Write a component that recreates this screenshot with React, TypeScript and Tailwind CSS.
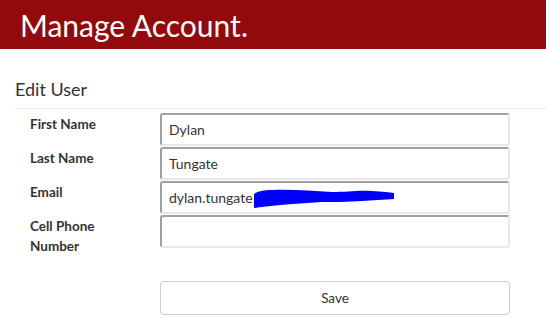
import React from 'react';

const fields = [
  { label: 'First Name', value: 'Dylan' },
  { label: 'Last Name', value: 'Tungate' },
  { label: 'Email', value: 'dylan.tungate', redacted: true },
  { label: 'Cell Phone Number', value: '' },
];

const App: React.FC = () => {
  return (
    <div className="w-[546px] h-[334px] bg-white overflow-hidden font-['Lato','Liberation_Sans',sans-serif] text-[#333]">
      <div className="h-[49px] bg-[#920a0c] flex items-center pl-[20px]">
        <h1 className="text-[30px] text-white leading-none">Manage Account.</h1>
      </div>

      <div className="pl-[15px] pt-[30px]">
        <h2 className="text-[18px] leading-[20px] text-[#333]">Edit User</h2>
        <div className="mt-[9px] border-t border-[#eeeeee]" />

        <div className="mt-[4px] flex flex-col gap-[1px]">
          {fields.map((f) => (
            <div key={f.label} className="flex">
              <label className="w-[145px] pl-[15px] pt-[1px] pr-[30px] text-[13.5px] font-bold leading-[20px] text-[#333]">
                {f.label}
              </label>
              <div className="relative">
                <input
                  type="text"
                  defaultValue={f.value}
                  className="w-[350px] h-[33px] px-[7px] text-[14px] text-[#333] bg-white rounded-[3px] border-2 border-t-[#a0a0a0] border-l-[#a0a0a0] border-r-[#e8e8e8] border-b-[#e8e8e8] outline-none"
                />
                {f.redacted && (
                  <svg className="absolute left-[92px] top-[7px]" width="144" height="22" viewBox="0 0 144 22">
                    <path
                      d="M2 6 C6 3 12 2 20 2 C40 1 60 3 80 4 C95 4 105 2 120 3 C130 4 138 4 142 5 L142 11 C132 12 120 12 110 13 C95 14 82 14 70 14 C55 15 40 16 28 17 C18 18 8 19 2 20 Z"
                      fill="#0000ff"
                    />
                  </svg>
                )}
              </div>
            </div>
          ))}
        </div>

        <div className="mt-[25px] pl-[145px]">
          <button className="w-[350px] h-[34px] border border-[#cccccc] rounded-[4px] bg-white text-[13.5px] text-[#333]">
            Save
          </button>
        </div>
      </div>
    </div>
  );
};

export default App;
